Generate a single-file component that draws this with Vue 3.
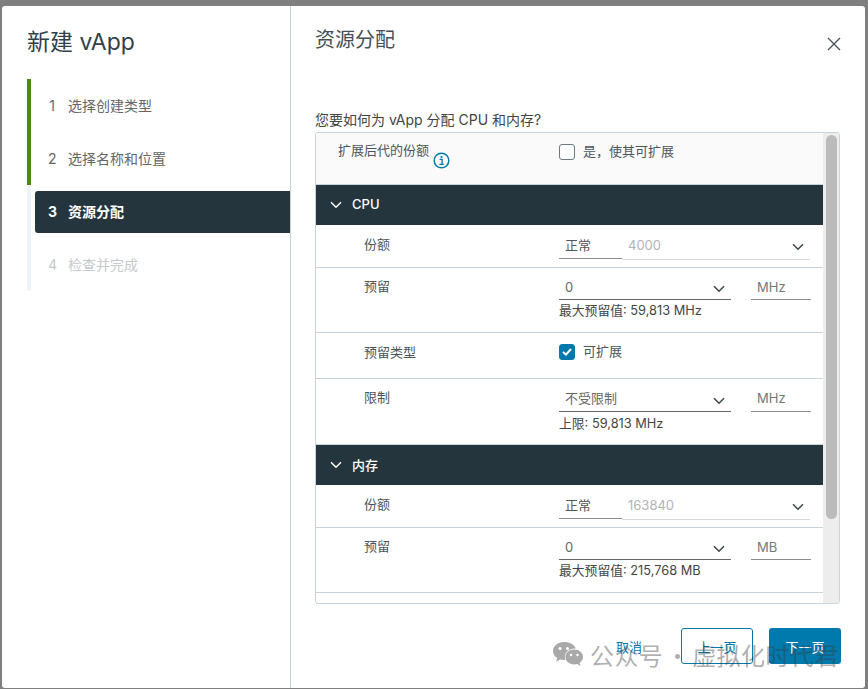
<script setup>
const steps = [
  { no: 1, label: '选择创建类型', state: 'done' },
  { no: 2, label: '选择名称和位置', state: 'done' },
  { no: 3, label: '资源分配', state: 'active' },
  { no: 4, label: '检查并完成', state: 'todo' }
]
</script>

<template>
  <div class="backdrop">
    <div class="modal">
      <aside class="side">
        <h1 class="side-title">新建 vApp</h1>
        <ol class="steps">
          <li v-for="s in steps" :key="s.no" :class="['step', s.state]">
            <div class="step-inner">
              <span class="step-no">{{ s.no }}</span>
              <span>{{ s.label }}</span>
            </div>
          </li>
        </ol>
      </aside>

      <main class="content">
        <header class="head">
          <h2>资源分配</h2>
          <svg class="close" width="14" height="14" viewBox="0 0 14 14">
            <path d="M1 1l12 12M13 1L1 13" fill="none" stroke="#49545b" stroke-width="1.4" />
          </svg>
        </header>
        <p class="question">您要如何为 vApp 分配 CPU 和内存?</p>

        <div class="panel">
          <div class="rows">
            <div class="row top-row">
              <div class="top-label">
                <span>扩展后代的份额</span>
                <svg class="info" width="17" height="17" viewBox="0 0 17 17">
                  <circle cx="8.5" cy="8.5" r="7.3" fill="none" stroke="#0079ad" stroke-width="1.5" />
                  <circle cx="8.5" cy="5" r="1.1" fill="#0079ad" />
                  <path d="M6.600 7.400h2.500v4.600M6.400 12.400h4.400" fill="none" stroke="#0079ad" stroke-width="1.400" />
                </svg>
              </div>
              <label class="check-wrap"><span class="checkbox"></span><span class="check-text">是，使其可扩展</span></label>
            </div>

            <div class="group">
              <svg width="12" height="8" viewBox="0 0 12 8"><path d="M1 1.2l5 5 5-5" fill="none" stroke="#fff" stroke-width="1.4" /></svg>
              <span>CPU</span>
            </div>

            <div class="row h41">
              <div class="label">份额</div>
              <div class="shares">
                <span class="share-sel">正常</span>
                <span class="share-val">
                  <span>4000</span>
                  <svg class="chev" width="12" height="8" viewBox="0 0 12 8"><path d="M1 1.2l5 5 5-5" fill="none" stroke="#3d4a52" stroke-width="1.6" /></svg>
                </span>
              </div>
            </div>

            <div class="row h64">
              <div class="label">预留</div>
              <div>
                <div class="pair">
                  <span class="sel">
                    <span>0</span>
                    <svg class="chev" width="12" height="8" viewBox="0 0 12 8"><path d="M1 1.2l5 5 5-5" fill="none" stroke="#3d4a52" stroke-width="1.6" /></svg>
                  </span>
                  <span class="unit">MHz</span>
                </div>
                <div class="hint">最大预留值: 59,813 MHz</div>
              </div>
            </div>

            <div class="row h45">
              <div class="label">预留类型</div>
              <label class="check-wrap">
                <span class="checkbox on">
                  <svg width="10" height="8" viewBox="0 0 10 8"><path d="M1 4l3 2.6L9 1" fill="none" stroke="#fff" stroke-width="2" /></svg>
                </span>
                <span class="check-text">可扩展</span>
              </label>
            </div>

            <div class="row h65">
              <div class="label">限制</div>
              <div>
                <div class="pair tall">
                  <span class="sel cjk">
                    <span>不受限制</span>
                    <svg class="chev" width="12" height="8" viewBox="0 0 12 8"><path d="M1 1.2l5 5 5-5" fill="none" stroke="#3d4a52" stroke-width="1.6" /></svg>
                  </span>
                  <span class="unit">MHz</span>
                </div>
                <div class="hint limit">上限: 59,813 MHz</div>
              </div>
            </div>

            <div class="group">
              <svg width="12" height="8" viewBox="0 0 12 8"><path d="M1 1.2l5 5 5-5" fill="none" stroke="#fff" stroke-width="1.4" /></svg>
              <span>内存</span>
            </div>

            <div class="row h41">
              <div class="label">份额</div>
              <div class="shares">
                <span class="share-sel">正常</span>
                <span class="share-val">
                  <span>163840</span>
                  <svg class="chev" width="12" height="8" viewBox="0 0 12 8"><path d="M1 1.2l5 5 5-5" fill="none" stroke="#3d4a52" stroke-width="1.6" /></svg>
                </span>
              </div>
            </div>

            <div class="row h64">
              <div class="label">预留</div>
              <div>
                <div class="pair">
                  <span class="sel">
                    <span>0</span>
                    <svg class="chev" width="12" height="8" viewBox="0 0 12 8"><path d="M1 1.2l5 5 5-5" fill="none" stroke="#3d4a52" stroke-width="1.6" /></svg>
                  </span>
                  <span class="unit">MB</span>
                </div>
                <div class="hint">最大预留值: 215,768 MB</div>
              </div>
            </div>
          </div>
          <div class="scrollbar"><div class="thumb"></div></div>
        </div>

        <footer class="foot">
          <button class="btn link">取消</button>
          <button class="btn outline">上一页</button>
          <button class="btn primary">下一页</button>
        </footer>
      </main>
    </div>

    <!-- 公众号水印 -->
    <div class="watermark">
      <svg width="32" height="28" viewBox="0 0 32 28">
        <path d="M12 1C5.900 1 1 5 1 10c0 2.900 1.600 5.400 4.200 7.100L4 20.800l4.300-2.200c1.200.3 2.400.5 3.700.5.400 0 .8 0 1.200-.1-.3-.9-.4-1.800-.4-2.700 0-4.900 4.500-8.800 10-8.800h.9C22.400 3.600 17.600 1 12 1z" fill="#a9a9a9" />
        <path d="M31 16c0-4.100-4-7.400-8.800-7.400S13.400 11.900 13.400 16s4 7.400 8.800 7.400c1 0 2-.1 2.900-.4l3.400 2-.9-3.100c2.100-1.400 3.400-3.500 3.400-5.900z" fill="#a9a9a9" />
        <circle cx="8" cy="7.500" r="1.500" fill="#fff" />
        <circle cx="15.500" cy="7.500" r="1.500" fill="#fff" />
        <circle cx="19" cy="14" r="1.200" fill="#fff" />
        <circle cx="25.500" cy="14" r="1.200" fill="#fff" />
      </svg>
      <span class="mark-text">公众号 · 虚拟化时代君</span>
    </div>
  </div>
</template>

<style>
html, body {
  margin: 0;
  background: #7f7f7f;
}
</style>

<style scoped>
.backdrop {
  position: relative;
  width: 868px;
  height: 689px;
  box-sizing: border-box;
  padding: 6px 3px 1px 2px;
  background: #7f7f7f;
  font-family: Inter, "Noto Sans CJK SC", sans-serif;
  font-size: 13px;
  color: #49545b;
  overflow: hidden;
}

.modal {
  display: flex;
  height: 100%;
  background: #fff;
  border-radius: 3px;
}

.side {
  width: 289px;
  flex: none;
  box-sizing: border-box;
  padding-left: 25px;
  border-right: 1px solid #c9d3da;
}

.side-title {
  margin: 21px 0 22px;
  font-size: 23px;
  line-height: 30px;
  font-weight: 400;
  color: #333f47;
}

.steps {
  margin: 0;
  padding: 0;
  list-style: none;
}

.step {
  height: 53px;
  box-sizing: border-box;
  padding: 6px 0 5px 4px;
  border-left: 4px solid #eef4f7;
  color: #666;
}

.step.done {
  border-left-color: #4b8a12;
}

.step-inner {
  display: flex;
  align-items: center;
  gap: 12px;
  height: 42px;
  box-sizing: border-box;
  padding: 0 0 2px 13px;
  border-radius: 3px 0 0 3px;
  font-size: 14px;
}

.step-no {
  width: 8px;
  text-align: center;
}

.step.active .step-inner {
  background: #24353e;
  color: #fff;
  font-weight: 700;
}

.step.todo {
  color: #c4cacd;
}

.content {
  flex: 1;
  min-width: 0;
  box-sizing: border-box;
  padding: 0 25px 0 24px;
  display: flex;
  flex-direction: column;
}

.head {
  display: flex;
  justify-content: space-between;
  height: 88px;
  padding-top: 19px;
  box-sizing: border-box;
}

.head h2 {
  margin: 0;
  font-size: 20px;
  line-height: 30px;
  font-weight: 400;
  color: #454f56;
}

.close {
  margin: 12px -1px 0 0;
}

.question {
  margin: 18px 0 4px;
  font-size: 14px;
  line-height: 16px;
  color: #444;
}

.panel {
  display: flex;
  height: 472px;
  box-sizing: border-box;
  border: 1px solid #c9d3da;
  border-radius: 3px;
  overflow: hidden;
  flex: none;
}

.rows {
  flex: 1;
  min-width: 0;
  overflow: hidden;
}

.scrollbar {
  width: 16px;
  flex: none;
  padding: 2px 2px 0 3px;
  box-sizing: border-box;
  background: #ededed;
}

.thumb {
  height: 384px;
  border-radius: 6px;
  background: #bbb;
}

.row {
  display: flex;
  box-sizing: border-box;
  border-bottom: 1px solid #c9d3da;
  padding-left: 48px;
}

.top-row {
  height: 52px;
  padding: 9px 0 0 22px;
  background: #fafafa;
}

.top-label {
  width: 221px;
  display: flex;
  align-items: flex-start;
  line-height: 20px;
  margin-top: -2px;
}

.info {
  margin: 12px 0 0 4px;
}

.label {
  width: 195px;
  flex: none;
  padding-top: 8px;
  line-height: 20px;
}

.h41 { height: 42px; }
.h64 { height: 65px; }
.h45 { height: 46px; }
.h65 { height: 66px; }

.h45 .label {
  padding-top: 9px;
}

.group {
  display: flex;
  align-items: center;
  gap: 10px;
  height: 40px;
  box-sizing: border-box;
  padding: 0 0 2px 14px;
  margin-bottom: 1px;
  background: #24353e;
  color: #fff;
  font-weight: 500;
}

.group svg {
  margin-top: 2px;
}

.check-wrap {
  display: flex;
  align-items: center;
  gap: 8px;
  height: 20px;
}

.check-text {
  margin-bottom: 3px;
}

.h45 .check-wrap {
  margin-top: 9px;
}

.checkbox {
  width: 16px;
  height: 16px;
  box-sizing: border-box;
  border: 1px solid #6a7880;
  border-radius: 3px;
  background: #fff;
  display: flex;
  align-items: center;
  justify-content: center;
}

.checkbox.on {
  background: #0079ad;
  border-color: #0079ad;
}

.shares {
  display: flex;
  padding-top: 7px;
}

.share-sel {
  width: 63px;
  height: 26px;
  box-sizing: border-box;
  padding: 2px 0 0 6px;
  border-bottom: 1px solid #8c8c8c;
  color: #555;
}

.share-val {
  width: 188px;
  height: 27px;
  box-sizing: border-box;
  padding: 4px 6px 0 6px;
  display: flex;
  justify-content: space-between;
  border-bottom: 1px solid #d8d8d8;
  color: #b3b3b3;
}

.chev {
  margin-top: 6px;
}

.pair {
  display: flex;
  gap: 20px;
  padding-top: 7px;
}

.pair.tall {
  padding-top: 8px;
}

.sel {
  width: 172px;
  height: 25px;
  box-sizing: border-box;
  padding: 4px 6px 0 6px;
  display: flex;
  justify-content: space-between;
  border-bottom: 1px solid #666;
  color: #666;
}

.sel.cjk {
  padding-top: 1px;
}

.sel.cjk .chev {
  margin-top: 9px;
}

.unit {
  width: 60px;
  height: 25px;
  box-sizing: border-box;
  padding: 4px 0 0 6px;
  border-bottom: 1px solid #8c8c8c;
  color: #777;
}

.tall .unit {
  padding-top: 3px;
}

.hint {
  font-size: 12.8px;
  line-height: 20px;
  margin-top: 1px;
  color: #444;
}

.hint.limit {
  margin-top: 2px;
}

.foot {
  display: flex;
  justify-content: flex-end;
  align-items: center;
  gap: 16px;
  margin-top: 24px;
  margin-right: -1px;
}

.btn {
  width: 72px;
  height: 36px;
  box-sizing: border-box;
  border-radius: 3px;
  border: 1px solid transparent;
  padding: 0;
  font: inherit;
  font-size: 13px;
  background: none;
}

.btn.link {
  color: #0079ad;
}

.btn.outline {
  border-color: #0079ad;
  color: #0079ad;
}

.btn.primary {
  background: #0079ad;
  color: #fff;
}

/* 水印盖在按钮上面 */
.watermark {
  position: absolute;
  left: 552px;
  top: 640px;
  display: flex;
  align-items: center;
  gap: 6px;
  font-size: 24px;
  line-height: 30px;
  color: rgba(60, 60, 60, 0.42);
  white-space: nowrap;
  font-family: "Noto Sans CJK SC", sans-serif;
}

.mark-text {
  letter-spacing: 0.4px;
  word-spacing: -3.5px;
}
</style>
